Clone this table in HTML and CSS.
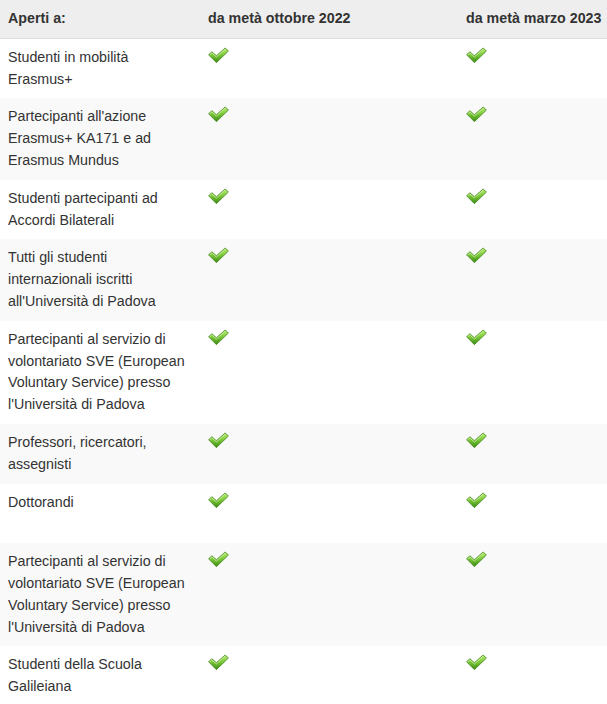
FILE: index.html
```html
<!DOCTYPE html>
<html lang="it">
<head>
<meta charset="utf-8">
<title>Aperti a</title>
<link rel="stylesheet" href="styles.css">
</head>
<body>
<svg class="defs" width="0" height="0" aria-hidden="true">
  <defs>
    <linearGradient id="g" x1="0" y1="0" x2="0" y2="1">
      <stop offset="0" stop-color="#b8ec74"/>
      <stop offset="0.45" stop-color="#7fcb3c"/>
      <stop offset="1" stop-color="#3a8a12"/>
    </linearGradient>
    <symbol id="check" viewBox="0 0 20 16">
      <path d="M0.6 7.4 L3.6 4.4 L8 8.2 L16.4 0.8 L19.4 3.8 L8 14.8 Z" fill="url(#g)" stroke="#4a8c22" stroke-width="0.8" stroke-linejoin="round"/>
      <path d="M1.8 7.3 L3.6 5.6 L8 9.4 L16.4 2" fill="none" stroke="#e2fbbf" stroke-width="0.8" opacity="0.75"/>
    </symbol>
  </defs>
</svg>
<div class="wrap">
<table class="tbl">
  <colgroup>
    <col class="c1"><col class="c2"><col class="c3">
  </colgroup>
  <thead>
    <tr><th>Aperti a:</th><th>da metà ottobre 2022</th><th>da metà marzo 2023</th></tr>
  </thead>
  <tbody>
    <tr><td>Studenti in mobilità Erasmus+</td><td><svg class="ok"><use href="#check"/></svg></td><td><svg class="ok"><use href="#check"/></svg></td></tr>
    <tr><td>Partecipanti all'azione Erasmus+ KA171 e ad Erasmus Mundus</td><td><svg class="ok"><use href="#check"/></svg></td><td><svg class="ok"><use href="#check"/></svg></td></tr>
    <tr><td>Studenti partecipanti ad Accordi Bilaterali</td><td><svg class="ok"><use href="#check"/></svg></td><td><svg class="ok"><use href="#check"/></svg></td></tr>
    <tr><td>Tutti gli studenti internazionali iscritti all'Università di Padova</td><td><svg class="ok"><use href="#check"/></svg></td><td><svg class="ok"><use href="#check"/></svg></td></tr>
    <tr><td>Partecipanti al servizio di volontariato SVE (European Voluntary Service) presso l'Università di Padova</td><td><svg class="ok"><use href="#check"/></svg></td><td><svg class="ok"><use href="#check"/></svg></td></tr>
    <tr><td>Professori, ricercatori, assegnisti</td><td><svg class="ok"><use href="#check"/></svg></td><td><svg class="ok"><use href="#check"/></svg></td></tr>
    <tr><td>Dottorandi<br>&nbsp;</td><td><svg class="ok"><use href="#check"/></svg></td><td><svg class="ok"><use href="#check"/></svg></td></tr>
    <tr><td>Partecipanti al servizio di volontariato SVE (European Voluntary Service) presso l'Università di Padova</td><td><svg class="ok"><use href="#check"/></svg></td><td><svg class="ok"><use href="#check"/></svg></td></tr>
    <tr><td>Studenti della Scuola Galileiana</td><td><svg class="ok"><use href="#check"/></svg></td><td><svg class="ok"><use href="#check"/></svg></td></tr>
  </tbody>
</table>
</div>
</body>
</html>
```
FILE: styles.css
```css
html, body {
  margin: 0;
  padding: 0;
  background: #ffffff;
}
body {
  font-family: "Liberation Sans", Arial, sans-serif;
  font-size: 14.25px;
  color: #333333;
  overflow: hidden;
}
.defs {
  position: absolute;
  width: 0;
  height: 0;
}
.wrap {
  width: 607px;
  overflow: hidden;
}
.tbl {
  width: 720px;
  table-layout: fixed;
  border-collapse: collapse;
  border-spacing: 0;
}
.c1 { width: 200px; }
.c2 { width: 258px; }
.c3 { width: 262px; }
.tbl th,
.tbl td {
  padding: 8px;
  line-height: 21.8px;
  text-align: left;
  vertical-align: top;
}
.tbl th {
  font-weight: bold;
  background: #eeeeee;
  border-bottom: 1px solid #dddddd;
  white-space: nowrap;
}
.tbl tbody tr:nth-child(odd) td {
  background: #ffffff;
}
.tbl tbody tr:nth-child(even) td {
  background: #f9f9f9;
}
.ok {
  display: block;
  width: 21px;
  height: 17px;
  margin-top: 0;
}
```
